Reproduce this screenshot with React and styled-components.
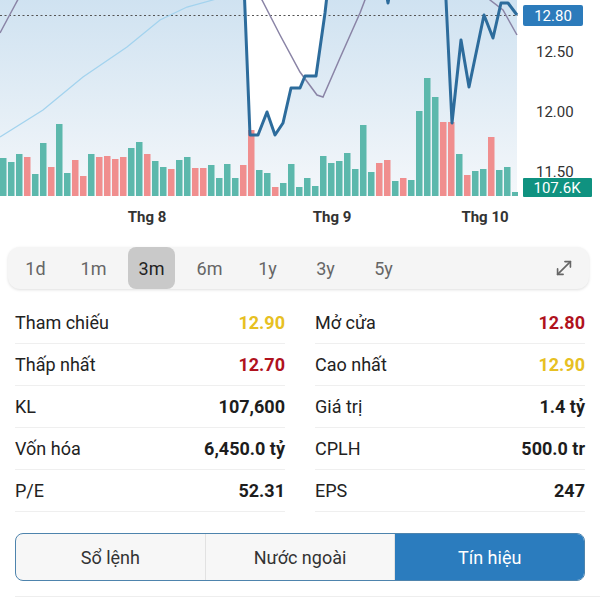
import React from 'react'
import styled, { createGlobalStyle } from 'styled-components'
import { MoveDiagonal } from 'lucide-react'

const Global = createGlobalStyle`
  body {
    margin: 0;
    background: #fff;
    font-family: Roboto, "Noto Sans", "Liberation Sans", sans-serif;
    color: #222;
  }
`

const TEAL = '#5cb8ac'
const PINK = '#f08e8e'

// volume bars, top y of each (baseline 196); r = red day
const bars = [
  158, 162, 154, [157], 174, 143, [167], 124, 173, [160], [176], 154, [157], [156], [159], [157],
  148, 142, [154], 161, 167, [169], 160, 157, [168], [168], 165, 178, 164, 178, [165], [130],
  170, 173, [187], 183, 164, 187, 178, 186, 156, 163, 161, 153, 169, 125, 172, [163], [160],
  181, [178], 180, 111, 78, 97, [122], [122], 154, [175], 171, 169, [137], 170, 167, 192,
]

const price = [
  [243, -40], [250, 135], [258, 135], [267, 112], [275, 135], [283, 123], [291, 88], [300, 88],
  [305, 76], [316, 76], [325, 13], [331, -40], [382, -30], [388, 3], [394, -30], [440, -30],
  [446, 0], [452, 123], [461, 40], [469, 87], [484, 15], [493, 38], [501, 3], [508, 3], [517, 15],
]
const maSlow = [[0, 137], [43, 110], [83, 77], [127, 47], [160, 20], [187, 7], [213, 0], [240, -10]]
const maFast = [
  [0, 33], [8, 18], [15, 5], [22, -8], [256, -8], [262, 0], [280, 35], [300, 72], [317, 95],
  [323, 97], [340, 58], [360, 13], [368, -8], [484, -8], [490, 0], [503, 10], [517, 35],
]

const toPath = (pts) => pts.map(([x, y], i) => `${i ? 'L' : 'M'}${x},${y}`).join(' ')

const areaPts = [
  [0, -40], ...price.filter(([x]) => x <= 331), [517, -40], [517, 196], [0, 196],
]

const ChartBox = styled.div`
  height: 232px;
  svg { display: block; }
`
const AxisText = styled.text`
  font-family: Roboto, "Liberation Sans", sans-serif;
  font-size: 15px;
  fill: ${(p) => (p.$light ? '#fff' : '#333')};
  font-weight: ${(p) => (p.$bold ? 700 : 400)};
`

const Chart = () => (
  <ChartBox>
    <svg width="600" height="232" viewBox="0 0 600 232">
      <defs>
        <linearGradient id="bg" x1="0" y1="0" x2="0" y2="1">
          <stop offset="0" stopColor="#c8deef" />
          <stop offset="1" stopColor="#f4f7fa" />
        </linearGradient>
        <clipPath id="plot">
          <rect x="0" y="0" width="518" height="197" />
        </clipPath>
      </defs>
      <g clipPath="url(#plot)">
        <path d={toPath(areaPts) + ' Z'} fill="url(#bg)" />
        {bars.map((b, i) => {
          const red = Array.isArray(b)
          const top = red ? b[0] : b
          return (
            <rect key={i} x={i * 8} y={top} width="6.5" height={196 - top} fill={red ? PINK : TEAL} />
          )
        })}
        <line x1="0" y1="15.5" x2="520" y2="15.5" stroke="#555" strokeWidth="1" strokeDasharray="2 2.5" />
        <path d={toPath(maSlow)} fill="none" stroke="#a3d3ee" strokeWidth="1.3" />
        <path d={toPath(maFast)} fill="none" stroke="#8a84a6" strokeWidth="1.5" />
        <path d={toPath(price)} fill="none" stroke="#2d6c9c" strokeWidth="3" strokeLinejoin="round" />
      </g>
      <AxisText x="536" y="57">12.50</AxisText>
      <AxisText x="536" y="117">12.00</AxisText>
      <AxisText x="536" y="177">11.50</AxisText>
      <rect x="523" y="5" width="60" height="21" rx="2" fill="#2c7bbb" />
      <AxisText x="553" y="21" textAnchor="middle" $light>12.80</AxisText>
      <rect x="523" y="178" width="69" height="19" rx="1" fill="#0f9280" />
      <AxisText x="557" y="193" textAnchor="middle" $light>107.6K</AxisText>
      <AxisText x="147" y="222" textAnchor="middle" $bold>Thg 8</AxisText>
      <AxisText x="332" y="222" textAnchor="middle" $bold>Thg 9</AxisText>
      <AxisText x="485" y="222" textAnchor="middle" $bold>Thg 10</AxisText>
    </svg>
  </ChartBox>
)

const PeriodBar = styled.div`
  margin: 15px 11px 0 8px;
  height: 42px;
  display: flex;
  align-items: center;
  gap: 11px;
  padding: 0 14px 0 4px;
  background: #f5f5f5;
  border-radius: 12px;
  box-shadow: 0 1px 3px rgba(0, 0, 0, 0.13);
`
const Period = styled.div`
  width: 47px;
  height: 42px;
  display: flex;
  align-items: center;
  justify-content: center;
  font-size: 18px;
  border-radius: 8px;
  color: ${(p) => (p.$active ? '#222' : '#666')};
  background: ${(p) => (p.$active ? '#c9c9c9' : 'transparent')};
`
const Expand = styled.div`
  margin-left: auto;
  display: flex;
  color: #666;
`

const Stats = styled.div`
  display: grid;
  grid-template-columns: 1fr 1fr;
  column-gap: 30px;
  padding: 13px 15px 0;
`
const Row = styled.div`
  height: 41px;
  display: flex;
  align-items: center;
  justify-content: space-between;
  border-bottom: 1px solid #efefef;
  font-size: 18px;
`
const Label = styled.span`
  color: #222;
`
const Value = styled.span`
  font-weight: 700;
  color: ${(p) => p.$color || '#1d1d1d'};
`

const YELLOW = '#e7c022'
const RED = '#b0121d'

const stats = [
  ['Tham chiếu', '12.90', YELLOW, 'Mở cửa', '12.80', RED],
  ['Thấp nhất', '12.70', RED, 'Cao nhất', '12.90', YELLOW],
  ['KL', '107,600', null, 'Giá trị', '1.4 tỷ', null],
  ['Vốn hóa', '6,450.0 tỷ', null, 'CPLH', '500.0 tr', null],
  ['P/E', '52.31', null, 'EPS', '247', null],
]

const Tabs = styled.div`
  margin: 21px 15px 0;
  height: 46px;
  display: flex;
  border: 1.5px solid #4e84ad;
  border-radius: 8px;
  overflow: hidden;
  background: #f7f7f7;
`
const Tab = styled.div`
  flex: 1;
  display: flex;
  align-items: center;
  justify-content: center;
  font-size: 18px;
  color: ${(p) => (p.$active ? '#fff' : '#333')};
  background: ${(p) => (p.$active ? '#2b7cbe' : 'transparent')};
  & + & {
    border-left: 1px solid #e2e2e2;
  }
`
const Footer = styled.div`
  margin: 15px 0 0 15px;
  border-top: 1px solid #eee;
`

export default function App() {
  const periods = ['1d', '1m', '3m', '6m', '1y', '3y', '5y']
  return (
    <>
      <Global />
      <Chart />
      <PeriodBar>
        {periods.map((p) => (
          <Period key={p} $active={p === '3m'}>{p}</Period>
        ))}
        <Expand>
          <MoveDiagonal size={22} strokeWidth={1.8} />
        </Expand>
      </PeriodBar>
      <Stats>
        {stats.map(([l1, v1, c1, l2, v2, c2]) => (
          <React.Fragment key={l1}>
            <Row>
              <Label>{l1}</Label>
              <Value $color={c1}>{v1}</Value>
            </Row>
            <Row>
              <Label>{l2}</Label>
              <Value $color={c2}>{v2}</Value>
            </Row>
          </React.Fragment>
        ))}
      </Stats>
      <Tabs>
        <Tab>Sổ lệnh</Tab>
        <Tab>Nước ngoài</Tab>
        <Tab $active>Tín hiệu</Tab>
      </Tabs>
      <Footer />
    </>
  )
}
